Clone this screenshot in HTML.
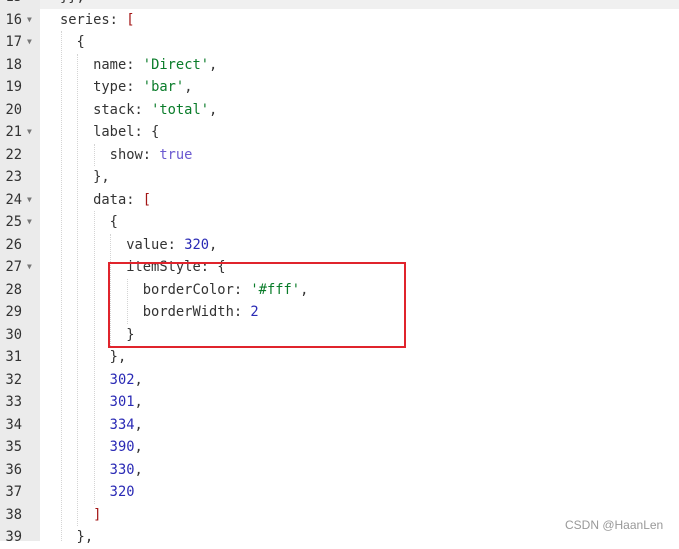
<!DOCTYPE html>
<html><head><meta charset="utf-8"><style>
html,body{margin:0;padding:0;width:679px;height:541px;overflow:hidden;background:#fff;}
.g{position:absolute;left:0;top:0;width:40px;height:541px;background:#ebebeb;}
.hl{position:absolute;left:0;top:0;width:679px;height:9px;background:#f0f0f0;}
.row{position:absolute;left:0;height:22.5px;line-height:22.5px;width:679px;font-family:"DejaVu Sans Mono","Liberation Mono",monospace;font-size:13.75px;color:#333;white-space:pre;}
.n{position:absolute;left:0;width:22px;text-align:right;color:#333;}
.f{position:absolute;left:27px;top:0;font-size:8px;color:#777;}
.c{position:absolute;left:60px;}
.s{color:#0a7c2a}.b{color:#2a2ab5}.t{color:#6b5ad0}.r{color:#a31515}
.guide{position:absolute;width:0;border-left:1px dotted #d4d4d4;}
.box{position:absolute;left:108px;top:262px;width:294px;height:82px;border:2px solid #e0242c;}
.wm{position:absolute;left:565px;top:518px;font-family:"Liberation Sans",sans-serif;font-size:12px;color:#999;}
</style></head><body>
<div class="hl"></div>
<div class="g"></div>
<div id="rows"></div>
<div class="row" style="top:-13.75px"><span class="n">15</span><span class="c">}},</span></div>
<div class="row" style="top:8.75px"><span class="n">16</span><span class="f">▼</span><span class="c">series: <span class="r">[</span></span></div>
<div class="row" style="top:31.25px"><span class="n">17</span><span class="f">▼</span><span class="c">  {</span></div>
<div class="row" style="top:53.75px"><span class="n">18</span><span class="c">    name: <span class="s">'Direct'</span>,</span></div>
<div class="row" style="top:76.25px"><span class="n">19</span><span class="c">    type: <span class="s">'bar'</span>,</span></div>
<div class="row" style="top:98.75px"><span class="n">20</span><span class="c">    stack: <span class="s">'total'</span>,</span></div>
<div class="row" style="top:121.25px"><span class="n">21</span><span class="f">▼</span><span class="c">    label: {</span></div>
<div class="row" style="top:143.75px"><span class="n">22</span><span class="c">      show: <span class="t">true</span></span></div>
<div class="row" style="top:166.25px"><span class="n">23</span><span class="c">    },</span></div>
<div class="row" style="top:188.75px"><span class="n">24</span><span class="f">▼</span><span class="c">    data: <span class="r">[</span></span></div>
<div class="row" style="top:211.25px"><span class="n">25</span><span class="f">▼</span><span class="c">      {</span></div>
<div class="row" style="top:233.75px"><span class="n">26</span><span class="c">        value: <span class="b">320</span>,</span></div>
<div class="row" style="top:256.25px"><span class="n">27</span><span class="f">▼</span><span class="c">        itemStyle: {</span></div>
<div class="row" style="top:278.75px"><span class="n">28</span><span class="c">          borderColor: <span class="s">'#fff'</span>,</span></div>
<div class="row" style="top:301.25px"><span class="n">29</span><span class="c">          borderWidth: <span class="b">2</span></span></div>
<div class="row" style="top:323.75px"><span class="n">30</span><span class="c">        }</span></div>
<div class="row" style="top:346.25px"><span class="n">31</span><span class="c">      },</span></div>
<div class="row" style="top:368.75px"><span class="n">32</span><span class="c">      <span class="b">302</span>,</span></div>
<div class="row" style="top:391.25px"><span class="n">33</span><span class="c">      <span class="b">301</span>,</span></div>
<div class="row" style="top:413.75px"><span class="n">34</span><span class="c">      <span class="b">334</span>,</span></div>
<div class="row" style="top:436.25px"><span class="n">35</span><span class="c">      <span class="b">390</span>,</span></div>
<div class="row" style="top:458.75px"><span class="n">36</span><span class="c">      <span class="b">330</span>,</span></div>
<div class="row" style="top:481.25px"><span class="n">37</span><span class="c">      <span class="b">320</span></span></div>
<div class="row" style="top:503.75px"><span class="n">38</span><span class="c">    <span class="r">]</span></span></div>
<div class="row" style="top:526.25px"><span class="n">39</span><span class="c">  },</span></div>
<div class="guide" style="left:61px;top:31px;height:510px"></div>
<div class="guide" style="left:77px;top:54px;height:472px"></div>
<div class="guide" style="left:94px;top:144px;height:22px"></div>
<div class="guide" style="left:94px;top:211px;height:293px"></div>
<div class="guide" style="left:110px;top:234px;height:112px"></div>
<div class="guide" style="left:127px;top:279px;height:45px"></div>
<div class="box"></div>
<div class="wm">CSDN @HaanLen</div>
</body></html>
